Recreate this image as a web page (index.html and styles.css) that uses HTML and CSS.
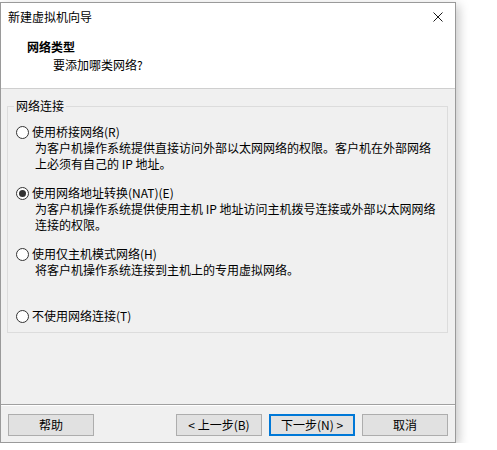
FILE: index.html
```html
<!DOCTYPE html>
<html lang="zh-CN">
<head>
    <meta charset="UTF-8">
    <meta name="viewport" content="width=device-width, initial-scale=1.0">
    <title>新建虚拟机向导</title>
    <link rel="stylesheet" href="styles.css">
</head>
<body>
    <div class="wizard">
        <div class="titlebar">
            <span class="title">新建虚拟机向导</span>
            <span class="close">
                <svg width="10" height="10" viewBox="0 0 10 10">
                    <path d="M0.5 0.5 L9.5 9.5 M9.5 0.5 L0.5 9.5" stroke="#1a1a1a" stroke-width="1" fill="none"/>
                </svg>
            </span>
        </div>

        <div class="header">
            <div class="header-title">网络类型</div>
            <div class="header-sub">要添加哪类网络?</div>
        </div>

        <div class="content">
            <fieldset class="group">
                <legend>网络连接</legend>

                <div class="option">
                    <div class="radio-row"><span class="radio"></span>使用桥接网络(R)</div>
                    <div class="desc">为客户机操作系统提供直接访问外部以太网网络的权限。客户机在外部网络<br>上必须有自己的 IP 地址。</div>
                </div>

                <div class="option">
                    <div class="radio-row"><span class="radio checked"></span>使用网络地址转换(NAT)(E)</div>
                    <div class="desc">为客户机操作系统提供使用主机 IP 地址访问主机拨号连接或外部以太网网络<br>连接的权限。</div>
                </div>

                <div class="option">
                    <div class="radio-row"><span class="radio"></span>使用仅主机模式网络(H)</div>
                    <div class="desc">将客户机操作系统连接到主机上的专用虚拟网络。</div>
                </div>

                <div class="option last">
                    <div class="radio-row"><span class="radio"></span>不使用网络连接(T)</div>
                </div>
            </fieldset>
        </div>

        <div class="footer">
            <button class="btn">帮助</button>
            <div class="nav">
                <button class="btn">&lt; 上一步(B)</button>
                <button class="btn default">下一步(N) &gt;</button>
                <button class="btn">取消</button>
            </div>
        </div>
    </div>
</body>
</html>
```

FILE: styles.css
```css
body {
    margin: 0;
    background: #fff;
    font-family: "Noto Sans CJK SC", "Noto Sans", sans-serif;
    font-size: 12px;
    color: #000;
}

.wizard {
    box-sizing: border-box;
    width: 456px;
    height: 441px;
    margin-top: 2px;
    border: 1px solid #9a9a9a;
    background: #f0f0f0;
    display: flex;
    flex-direction: column;
    box-shadow: 3px 3px 10px rgba(0, 0, 0, 0.22);
}

.titlebar {
    height: 28px;
    background: #fff;
    display: flex;
    align-items: center;
    justify-content: space-between;
    padding: 0 12px 0 7px;
}

.title {
    line-height: 16px;
}

.close {
    display: flex;
}

.header {
    height: 58px;
    box-sizing: border-box;
    background: #fff;
    border-bottom: 1px solid #cfcfcf;
    padding-top: 7px;
}

.header-title {
    font-weight: bold;
    line-height: 18px;
    padding-left: 26px;
}

.header-sub {
    line-height: 18px;
    padding-left: 52px;
}

.content {
    flex: 1;
}

.group {
    margin: 9px 7px 0 6px;
    border: 1px solid #dcdcdc;
    padding: 10px 0 8px 8px;
}

.group legend {
    padding: 0 2px;
    margin-left: -2px;
    line-height: 16px;
}

.option {
    margin-top: 13px;
}

.option:first-of-type {
    margin-top: 0;
}

.option.last {
    margin-top: 30px;
}

.radio-row {
    display: flex;
    align-items: center;
    line-height: 16px;
}

.radio {
    box-sizing: border-box;
    width: 13px;
    height: 13px;
    border: 1px solid #333;
    border-radius: 50%;
    background: #fff;
    margin-right: 3px;
    display: flex;
    align-items: center;
    justify-content: center;
}

.radio.checked::after {
    content: "";
    width: 7px;
    height: 7px;
    border-radius: 50%;
    background: #333;
}

.desc {
    line-height: 16px;
    padding-left: 19px;
}

.footer {
    height: 38px;
    box-sizing: border-box;
    border-top: 1px solid #a0a0a0;
    box-shadow: inset 0 1px #fff;
    padding: 9px 7px 0 7px;
    display: flex;
    justify-content: space-between;
    align-items: flex-start;
}

.nav {
    display: flex;
    gap: 7px;
}

.btn {
    box-sizing: border-box;
    width: 86px;
    height: 22px;
    background: #e1e1e1;
    border: 1px solid #adadad;
    font-family: inherit;
    font-size: 12px;
    color: #000;
    padding: 0;
    line-height: 18px;
}

.btn.default {
    border-color: #0078d7;
    box-shadow: inset 0 0 0 1px #0078d7;
}
```
